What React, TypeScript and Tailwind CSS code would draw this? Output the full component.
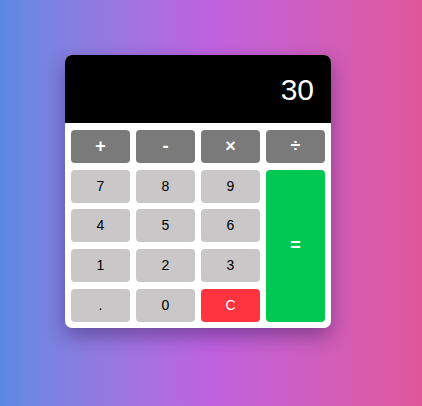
const keys = [
  { label: '7' },
  { label: '8' },
  { label: '9' },
  { label: '4' },
  { label: '5' },
  { label: '6' },
  { label: '1' },
  { label: '2' },
  { label: '3' },
  { label: '.' },
  { label: '0' },
];

const ops = ['+', '-', '×', '÷'];

export default function App() {
  return (
    <div className="min-h-[406px] w-full bg-linear-to-r from-[#5a8ae2] via-[#c062e0] to-[#e0569a] pl-[65px] pt-[55px] font-['Liberation_Sans',Arial,sans-serif]">
      <div className="w-[266px] overflow-hidden rounded-[7px] bg-white shadow-[0_8px_20px_rgba(40,20,80,0.45)]">
        {/* Display */}
        <div className="flex h-[68px] items-center justify-end bg-black pr-[17px] text-[30px] text-white">
          30
        </div>

        {/* Keypad */}
        <div className="grid grid-cols-4 grid-rows-[repeat(5,33px)] gap-x-[6px] gap-y-[6.7px] px-[6px] pt-[7px] pb-[6px]">
          {ops.map((op) => (
            <button
              key={op}
              className="flex items-center justify-center rounded-[4px] bg-[#7a7a7a] text-[18px] font-bold text-white"
            >
              {op}
            </button>
          ))}
          {keys.slice(0, 3).map((k) => (
            <button key={k.label} className="flex items-center justify-center rounded-[4px] bg-[#c9c7c7] text-[14px] text-black">
              {k.label}
            </button>
          ))}
          <button className="row-span-4 flex items-center justify-center rounded-[4px] bg-[#00c853] text-[18px] font-bold text-white">
            =
          </button>
          {keys.slice(3).map((k) => (
            <button key={k.label} className="flex items-center justify-center rounded-[4px] bg-[#c9c7c7] text-[14px] text-black">
              {k.label}
            </button>
          ))}
          <button className="flex items-center justify-center rounded-[4px] bg-[#ff343f] text-[14px] text-white">
            C
          </button>
        </div>
      </div>
    </div>
  );
}
